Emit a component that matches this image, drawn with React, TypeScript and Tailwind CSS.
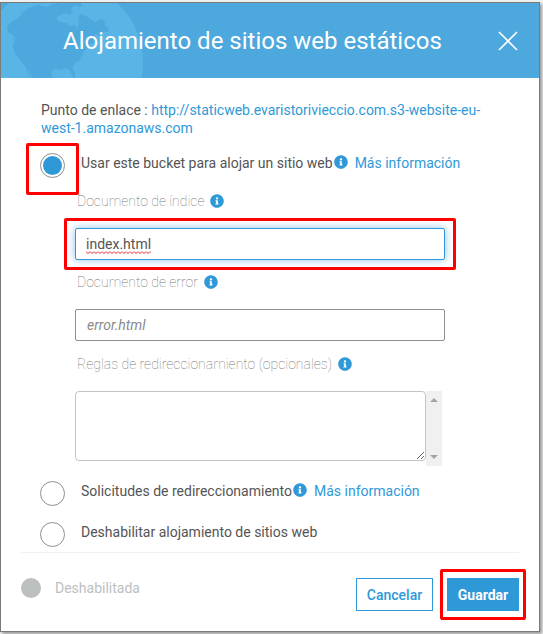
import type { ReactNode } from 'react'
import { FaInfoCircle } from 'react-icons/fa'

const ENDPOINT = 'http://staticweb.evaristorivieccio.com.s3-website-eu-west-1.amazonaws.com'

function Globe() {
    return (
        <svg className="absolute left-0 top-0" width="150" height="75" viewBox="1 3 150 75" aria-hidden="true">
            <circle cx="63" cy="62" r="80" fill="#58b5e5" />
            <path
                fill="#4da8dd"
                d="M7 28L10 23L15 20L20 16L23 12L29 8L38 5L47 7L52 4L58 3L63 4L68 3L81 3L82 6L79 7L74 5L71 9L73 12L70 15L65 13L61 15L57 17L57 20L61 22L67 23L70 26L74 25L77 28L79 24L78 19L80 14L86 16L90 19L96 22L101 19L105 22L105 26L109 28L108 32L103 31L99 35L95 34L94 37L98 40L93 43L88 44L89 47L85 50L82 55L80 60L75 63L72 68L75 72L75 78L72 76L70 70L65 68L60 70L54 69L51 73L53 78L33 78L29 70L27 67L31 78L29 76L25 66L19 59L15 54L13 47L15 38L12 34L8 32Z"
            />
        </svg>
    )
}

// Red frame that marks a step of the walkthrough
function Highlight({ className }: { className: string }) {
    return <span className={`pointer-events-none absolute rounded-xs border-3 border-[#fe0000] ${className}`} />
}

function InfoIcon() {
    return <FaInfoCircle className="size-[14px] shrink-0 text-[#2f99d8]" />
}

// Spell checker's wavy line
function Squiggle() {
    return (
        <svg className="pointer-events-none absolute bottom-[6px] left-[11px]" width="65" height="3" aria-hidden="true">
            <defs>
                <pattern id="wave" width="4" height="3" patternUnits="userSpaceOnUse">
                    <path d="M0 .5L2 2.5L4 .5" fill="none" stroke="#e02020" />
                </pattern>
            </defs>
            <rect width="65" height="3" fill="url(#wave)" />
        </svg>
    )
}

interface OptionProps {
    id: string
    label: string
    checked?: boolean
    more?: boolean
    children?: ReactNode
}

function Option({ id, label, checked, more, children }: OptionProps) {
    return (
        <div className="flex items-start gap-4">
            <div className="relative flex shrink-0">
                <input
                    type="radio"
                    id={id}
                    name="hosting"
                    defaultChecked={checked}
                    className="size-[25px] appearance-none rounded-full border border-[#899191] bg-white bg-clip-content p-[2px] checked:bg-[#2f99d8]"
                />
                {children}
            </div>
            <div className="flex h-5 items-center">
                <label htmlFor={id}>{label}</label>
                {more && (
                    <>
                        <span className="ml-px mr-[7px] flex pb-0.5"><InfoIcon /></span>
                        <a href="#" className="text-[#2f99d8]">Más información</a>
                    </>
                )}
            </div>
        </div>
    )
}

function FieldLabel({ id, text }: { id: string; text: string }) {
    return (
        <div className="mb-[17px] ml-0.5 flex h-5 items-center gap-1.5">
            <label htmlFor={id} className="font-thin text-[#777]">{text}</label>
            <InfoIcon />
        </div>
    )
}

export default function App() {
    return (
        <div className="bg-[#f1f1f1] pb-[3px] pr-[3px] pt-[2px] font-['Roboto',sans-serif] text-sm text-[#545454]">
            <div className="border border-[#7a7a7a] bg-white shadow-[2px_2px_3px_#999]">
                <header className="relative flex h-[75px] items-center justify-between bg-[#4da8dd] pl-[62px] pr-5">
                    <Globe />
                    <h1 className="relative text-2xl text-white">Alojamiento de sitios web estáticos</h1>
                    <button type="button" aria-label="Cerrar" className="relative">
                        <svg width="22" height="22" viewBox="0 0 22 22" stroke="#fff" strokeWidth="1.6">
                            <path d="M2 2L20 20M20 2L2 20" />
                        </svg>
                    </button>
                </header>

                <main className="pb-[5px] pl-[39px] pr-10 pt-[23px]">
                    <p className="mb-4 ml-px leading-[18px]">
                        Punto de enlace : <a href="#" className="text-[#2f99d8]">{ENDPOINT}</a>
                    </p>

                    <Option id="host" label="Usar este bucket para alojar un sitio web" checked more>
                        <Highlight className="-inset-x-[14px] -bottom-[17px] -top-[10px]" />
                    </Option>

                    <div className="mb-[15px] ml-[35px] mr-[14px] mt-[13px]">
                        <FieldLabel id="index" text="Documento de índice" />
                        <div className="relative mb-3 mr-10 flex">
                            <input
                                id="index"
                                defaultValue="index.html"
                                className="h-8 w-full rounded-xs border border-[#2f99d8] px-[10px] shadow-[0_0_8px_#2f7fd880] outline-none"
                            />
                            <Squiggle />
                            <Highlight className="-inset-x-[11px] -inset-y-[10px]" />
                        </div>
                        <FieldLabel id="error" text="Documento de error" />
                        <div className="mb-[13px] mr-10 flex">
                            <input
                                id="error"
                                placeholder="error.html"
                                className="h-8 w-full rounded-xs border border-[#899191] px-[11px] outline-none placeholder:italic placeholder:text-[#8a8a8a]"
                            />
                        </div>
                        <FieldLabel id="rules" text="Reglas de redireccionamiento (opcionales)" />
                        <div className="mr-[43px] flex items-start">
                            <textarea id="rules" className="h-[70px] flex-1 rounded border border-[#c4c4c4] bg-white outline-none" />
                            <svg className="h-[75px] w-4 shrink-0 bg-[#f0f0f0]" viewBox="0 0 16 75" fill="#a3a3a3" aria-hidden="true">
                                <path d="M4 11L8 7L12 11ZM4 64L8 68L12 64Z" />
                            </svg>
                        </div>
                    </div>

                    <div className="space-y-4">
                        <Option id="redirect" label="Solicitudes de redireccionamiento" more />
                        <Option id="disable" label="Deshabilitar alojamiento de sitios web" />
                    </div>
                </main>

                <footer className="mx-5 flex items-start border-t border-[#f1f1f1] pb-5 pt-[25px]">
                    <span className="size-5 rounded-full bg-[#bcbfbf]" />
                    <span className="ml-[14px] text-[#bcbfbf]">Deshabilitada</span>
                    <button type="button" className="ml-auto h-[33px] w-[77px] border border-[#2f99d8] font-medium text-[#2f99d8]">
                        Cancelar
                    </button>
                    <div className="relative ml-[14px]">
                        <button type="button" className="h-[33px] w-[72px] bg-[#2f99d8] font-bold text-white">Guardar</button>
                        <Highlight className="-inset-x-[7px] -inset-y-[9px]" />
                    </div>
                </footer>
            </div>
        </div>
    )
}
